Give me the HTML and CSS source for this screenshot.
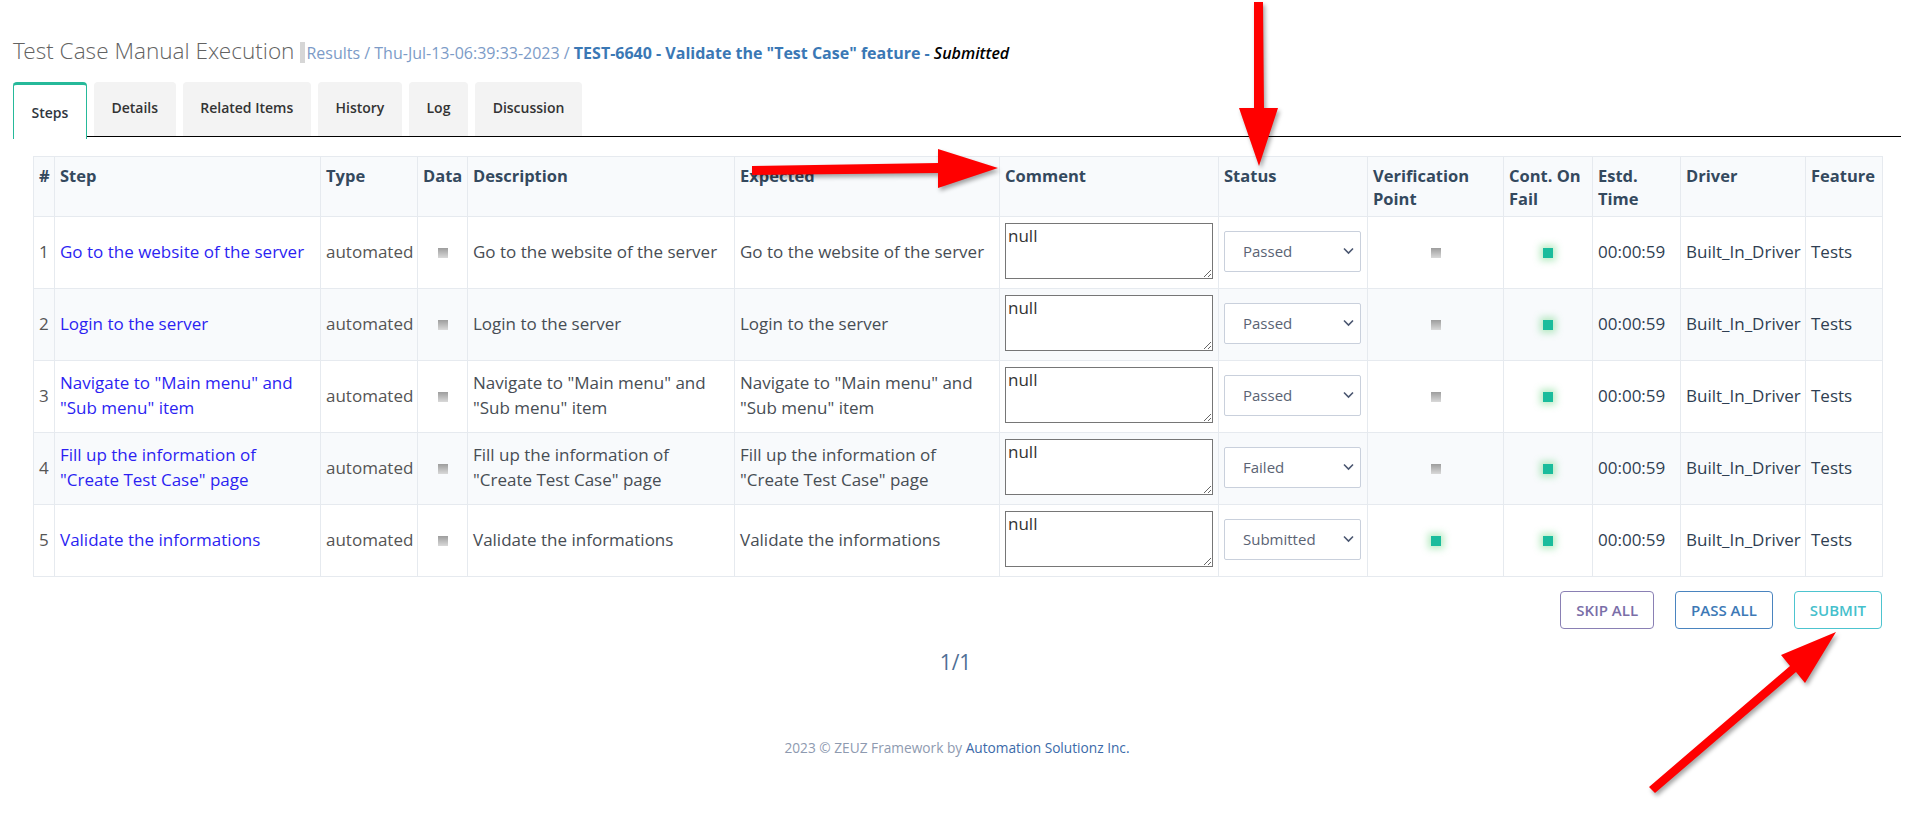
FILE: index.html
```html
<!DOCTYPE html>
<html lang="en">
<head>
<meta charset="utf-8">
<title>Test Case Manual Execution</title>
<link rel="stylesheet" href="styles.css">
</head>
<body>
<div class="page">
  <header class="page-header">
    <h1 class="title">Test Case Manual Execution</h1>
    <span class="title-sep"></span>
    <span class="crumbs">Results / Thu-Jul-13-06:39:33-2023 / <b class="crumb-tc">TEST-6640 - Validate the "Test Case" feature - </b><i class="crumb-status">Submitted</i></span>
  </header>

  <nav class="tabs">
    <div class="tab active">Steps</div>
    <div class="tab">Details</div>
    <div class="tab">Related Items</div>
    <div class="tab">History</div>
    <div class="tab">Log</div>
    <div class="tab">Discussion</div>
  </nav>

  <div class="content">
    <table class="steps">
      <colgroup>
        <col style="width:21px"><col style="width:266px"><col style="width:97px"><col style="width:50px">
        <col style="width:267px"><col style="width:265px"><col style="width:219px"><col style="width:149px">
        <col style="width:136px"><col style="width:89px"><col style="width:88px"><col style="width:125px"><col style="width:77px">
      </colgroup>
      <thead>
        <tr>
          <th>#</th><th>Step</th><th>Type</th><th>Data</th><th>Description</th><th>Expected</th><th>Comment</th><th>Status</th>
          <th>Verification Point</th><th>Cont. On Fail</th><th>Estd. Time</th><th>Driver</th><th>Feature</th>
        </tr>
      </thead>
      <tbody>
        <tr>
          <td class="num">1</td>
          <td><a class="step-link">Go to the website of the server</a></td>
          <td class="type">automated</td>
          <td class="center"><span class="sq gray"></span></td>
          <td class="txt">Go to the website of the server</td>
          <td class="txt">Go to the website of the server</td>
          <td class="comment"><textarea class="comment-box">null</textarea></td>
          <td class="status"><div class="select"><span>Passed</span><svg width="11" height="8" viewBox="0 0 11 8"><path d="M1 1.5 L5.5 6 L10 1.5" fill="none" stroke="#4a5670" stroke-width="1.6"/></svg></div></td>
          <td class="center"><span class="sq gray"></span></td>
          <td class="center"><span class="sq green"></span></td>
          <td class="dark">00:00:59</td>
          <td class="dark">Built_In_Driver</td>
          <td class="dark">Tests</td>
        </tr>
        <tr>
          <td class="num">2</td>
          <td><a class="step-link">Login to the server</a></td>
          <td class="type">automated</td>
          <td class="center"><span class="sq gray"></span></td>
          <td class="txt">Login to the server</td>
          <td class="txt">Login to the server</td>
          <td class="comment"><textarea class="comment-box">null</textarea></td>
          <td class="status"><div class="select"><span>Passed</span><svg width="11" height="8" viewBox="0 0 11 8"><path d="M1 1.5 L5.5 6 L10 1.5" fill="none" stroke="#4a5670" stroke-width="1.6"/></svg></div></td>
          <td class="center"><span class="sq gray"></span></td>
          <td class="center"><span class="sq green"></span></td>
          <td class="dark">00:00:59</td>
          <td class="dark">Built_In_Driver</td>
          <td class="dark">Tests</td>
        </tr>
        <tr>
          <td class="num">3</td>
          <td><a class="step-link">Navigate to "Main menu" and "Sub menu" item</a></td>
          <td class="type">automated</td>
          <td class="center"><span class="sq gray"></span></td>
          <td class="txt">Navigate to "Main menu" and "Sub menu" item</td>
          <td class="txt">Navigate to "Main menu" and "Sub menu" item</td>
          <td class="comment"><textarea class="comment-box">null</textarea></td>
          <td class="status"><div class="select"><span>Passed</span><svg width="11" height="8" viewBox="0 0 11 8"><path d="M1 1.5 L5.5 6 L10 1.5" fill="none" stroke="#4a5670" stroke-width="1.6"/></svg></div></td>
          <td class="center"><span class="sq gray"></span></td>
          <td class="center"><span class="sq green"></span></td>
          <td class="dark">00:00:59</td>
          <td class="dark">Built_In_Driver</td>
          <td class="dark">Tests</td>
        </tr>
        <tr>
          <td class="num">4</td>
          <td><a class="step-link">Fill up the information of "Create Test Case" page</a></td>
          <td class="type">automated</td>
          <td class="center"><span class="sq gray"></span></td>
          <td class="txt">Fill up the information of "Create Test Case" page</td>
          <td class="txt">Fill up the information of "Create Test Case" page</td>
          <td class="comment"><textarea class="comment-box">null</textarea></td>
          <td class="status"><div class="select"><span>Failed</span><svg width="11" height="8" viewBox="0 0 11 8"><path d="M1 1.5 L5.5 6 L10 1.5" fill="none" stroke="#4a5670" stroke-width="1.6"/></svg></div></td>
          <td class="center"><span class="sq gray"></span></td>
          <td class="center"><span class="sq green"></span></td>
          <td class="dark">00:00:59</td>
          <td class="dark">Built_In_Driver</td>
          <td class="dark">Tests</td>
        </tr>
        <tr>
          <td class="num">5</td>
          <td><a class="step-link">Validate the informations</a></td>
          <td class="type">automated</td>
          <td class="center"><span class="sq gray"></span></td>
          <td class="txt">Validate the informations</td>
          <td class="txt">Validate the informations</td>
          <td class="comment"><textarea class="comment-box">null</textarea></td>
          <td class="status"><div class="select"><span>Submitted</span><svg width="11" height="8" viewBox="0 0 11 8"><path d="M1 1.5 L5.5 6 L10 1.5" fill="none" stroke="#4a5670" stroke-width="1.6"/></svg></div></td>
          <td class="center"><span class="sq green"></span></td>
          <td class="center"><span class="sq green"></span></td>
          <td class="dark">00:00:59</td>
          <td class="dark">Built_In_Driver</td>
          <td class="dark">Tests</td>
        </tr>
      </tbody>
    </table>

    <div class="actions">
      <button class="btn btn-skip">SKIP ALL</button>
      <button class="btn btn-pass">PASS ALL</button>
      <button class="btn btn-submit">SUBMIT</button>
    </div>
  </div>

  <div class="pager">1/1</div>

  <footer class="footer">2023 © ZEUZ Framework by <a class="footer-link">Automation Solutionz Inc.</a></footer>
</div>

<svg class="annotations" width="1917" height="830" viewBox="0 0 1917 830">
  <g class="arrow">
    <polygon points="1254,2 1263,2 1264,108 1278,108 1259,166 1239,108 1254,108"/>
    <polygon points="752,166 938,163 938,149 998,168 938,188 938,173 752,175"/>
    <polygon points="1649,787 1790,666 1781,655 1836,632 1805,683 1796,672 1655,793"/>
  </g>
</svg>
</body>
</html>
```

FILE: styles.css
```css
* { box-sizing: border-box; }

html, body {
  margin: 0;
  padding: 0;
  background: #fff;
}

body {
  font-family: "Open Sans", "Noto Sans", "Liberation Sans", sans-serif;
  color: #444b52;
  position: relative;
  width: 1917px;
  height: 830px;
  overflow: hidden;
}

.page {
  padding: 34px 16px 0 13px;
}

.page-header {
  display: flex;
  align-items: baseline;
  height: 34px;
  white-space: nowrap;
}

.title {
  margin: 0;
  font-family: "Open Sans Light", "Open Sans", "Noto Sans", sans-serif;
  font-size: 22.6px;
  font-weight: 300;
  color: #626262;
  line-height: 34px;
}

.title-sep {
  display: inline-block;
  width: 5px;
  height: 21px;
  background: #d6d6d6;
  margin: 0 1px 0 6px;
  align-self: center;
  position: relative;
  top: 1px;
}

.crumbs {
  font-size: 16px;
  color: #7c9bc7;
}

.crumb-tc {
  color: #3a78b5;
  font-weight: 700;
}

.crumb-status {
  color: #000;
  font-weight: 600;
}

.tabs {
  display: flex;
  align-items: flex-end;
  gap: 7px;
  margin-top: 14px;
  border-bottom: 1px solid #000;
}

.tab {
  height: 54px;
  padding: 16px 17.6px 0;
  background: #f3f3f3;
  border-radius: 4px 4px 0 0;
  font-size: 14px;
  font-weight: 600;
  line-height: 20px;
  color: #333;
  white-space: nowrap;
}

.tab.active {
  background: #fff;
  border: 1px solid #26b99a;
  border-top: 3px solid #26b99a;
  border-bottom: none;
  padding: 18px 17.5px 0;
  height: 57px;
  margin-bottom: -3px;
  color: #2f3640;
}

.content {
  padding: 19px 19px 0 20px;
}

.steps {
  width: 1849px;
  table-layout: fixed;
  border-collapse: collapse;
  font-size: 17px;
  line-height: 25px;
}

.steps th {
  background: #f8fafc;
  border: 1px solid #e6eaef;
  text-align: left;
  vertical-align: top;
  font-size: 16.5px;
  font-weight: 700;
  line-height: 23px;
  color: #34495e;
  padding: 7px 5px 6px;
}

.steps td {
  border: 1px solid #e6eaef;
  vertical-align: middle;
  padding: 6px 5px 9px;
  height: 72px;
}

.steps tbody tr:nth-child(even) td {
  background: #f8fafc;
}

.num {
  color: #555;
  text-align: left;
}

.step-link {
  color: #2c1ff2;
  text-decoration: none;
  cursor: pointer;
}

.type {
  color: #555;
}

.txt {
  color: #474d54;
}

.dark {
  color: #2f3e52;
  white-space: nowrap;
}

.center {
  text-align: center;
}

.sq {
  display: inline-block;
  width: 10px;
  height: 10px;
  vertical-align: middle;
}

.sq.gray {
  background: linear-gradient(#9d9d9d, #d9d9d9);
}

.sq.green {
  background: #1abc9c;
  box-shadow: 0 0 7px 3px rgba(60, 200, 90, 0.35);
}

.comment {
  padding-left: 4px;
  padding-right: 5px;
}

.comment-box {
  display: block;
  width: 208px;
  height: 56px;
  margin: 0;
  border: 1px solid #767676;
  border-radius: 0;
  padding: 1px 2px;
  font-family: "Open Sans", "Noto Sans", sans-serif;
  font-size: 17px;
  line-height: 22px;
  color: #333;
  resize: vertical;
  background: #fff;
}

.status {
  padding-left: 6px;
}

.select {
  display: flex;
  align-items: center;
  justify-content: space-between;
  width: 137px;
  height: 41px;
  padding: 0 6px 0 18px;
  border: 1px solid #c9d0dc;
  border-radius: 2px;
  background: #fff;
  font-size: 15px;
  color: #5a6374;
}

.actions {
  display: flex;
  justify-content: flex-end;
  gap: 21px;
  margin-top: 14px;
}

.btn {
  height: 38px;
  padding: 0 15px;
  background: #fff;
  border: 1px solid;
  border-radius: 4px;
  font-family: "Open Sans", "Noto Sans", sans-serif;
  font-size: 15px;
  font-weight: 600;
  cursor: pointer;
}

.btn-skip { color: #7a6ea8; border-color: #8a80b4; }
.btn-pass { color: #3d79b6; border-color: #4a84bf; }
.btn-submit { color: #45c0cc; border-color: #4dc4cf; }

.pager {
  text-align: center;
  font-size: 21px;
  line-height: 28px;
  color: #4f6f95;
  margin-top: 19px;
  padding-right: 3px;
}

.footer {
  text-align: center;
  font-size: 13.7px;
  line-height: 20px;
  color: #8e9ab0;
  margin-top: 62px;
}

.footer-link {
  color: #3b6aa9;
  text-decoration: none;
}

.annotations {
  position: absolute;
  left: 0;
  top: 0;
  pointer-events: none;
}

.arrow {
  fill: #ff0000;
  filter: drop-shadow(2px 3px 2px rgba(0, 0, 0, 0.35));
}
```
